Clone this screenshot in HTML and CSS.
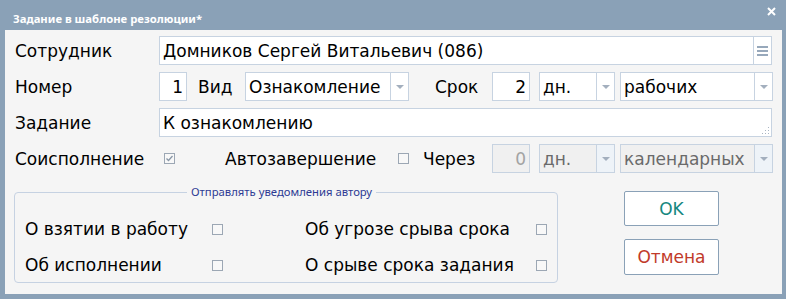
FILE: index.html
```html
<!DOCTYPE html>
<html lang="ru">
<head>
    <meta charset="UTF-8">
    <title>Задание в шаблоне резолюции</title>
    <link rel="stylesheet" href="styles.css">
</head>
<body>

<div class="window">
    <div class="titlebar">
        <span class="title">Задание в шаблоне резолюции*</span>
        <svg class="close" width="9" height="9" viewBox="0 0 9 9">
            <path d="M1 1 L8 8 M8 1 L1 8" stroke="#ffffff" stroke-width="2"/>
        </svg>
    </div>

    <div class="panel">
        <div class="row">
            <label class="lbl">Сотрудник</label>
            <div class="field w-full">
                <span class="value">Домников Сергей Витальевич (086)</span>
                <span class="side">
                    <svg width="11" height="10" viewBox="0 0 11 10">
                        <rect x="0" y="0" width="11" height="2" fill="#97a8bb"/>
                        <rect x="0" y="4" width="11" height="2" fill="#97a8bb"/>
                        <rect x="0" y="8" width="11" height="2" fill="#97a8bb"/>
                    </svg>
                </span>
            </div>
        </div>

        <div class="row">
            <label class="lbl">Номер</label>
            <div class="field num w-num1">1</div>
            <span class="inline vid">Вид</span>
            <div class="field select w-vid"><span class="value">Ознакомление</span><span class="arrow"></span></div>
            <span class="inline srok">Срок</span>
            <div class="field num w-num2">2</div>
            <div class="field select w-days"><span class="value">дн.</span><span class="arrow"></span></div>
            <div class="field select w-kind"><span class="value">рабочих</span><span class="arrow"></span></div>
        </div>

        <div class="row">
            <label class="lbl">Задание</label>
            <div class="field w-full">
                <span class="value">К ознакомлению</span>
                <svg class="grip" width="9" height="9" viewBox="0 0 9 9">
                    <rect x="7" y="1" width="1" height="1" fill="#a9b5c3"/>
                    <rect x="4" y="4" width="1" height="1" fill="#a9b5c3"/>
                    <rect x="7" y="4" width="1" height="1" fill="#a9b5c3"/>
                    <rect x="1" y="7" width="1" height="1" fill="#a9b5c3"/>
                    <rect x="4" y="7" width="1" height="1" fill="#a9b5c3"/>
                    <rect x="7" y="7" width="1" height="1" fill="#a9b5c3"/>
                </svg>
            </div>
        </div>

        <div class="row">
            <label class="lbl">Соисполнение</label>
            <span class="check co-check checked">
                <svg width="9" height="9" viewBox="0 0 9 9">
                    <path d="M1.5 4.5 L3.5 6.5 L7.5 2" stroke="#8896a6" stroke-width="1.3" fill="none"/>
                </svg>
            </span>
            <span class="inline auto">Автозавершение</span>
            <span class="check"></span>
            <span class="inline after">Через</span>
            <div class="field num w-num2 disabled faint">0</div>
            <div class="field select w-days disabled"><span class="value">дн.</span><span class="arrow"></span></div>
            <div class="field select w-kind disabled"><span class="value">календарных</span><span class="arrow"></span></div>
        </div>

        <div class="bottom">
            <fieldset class="notify">
                <legend>Отправлять уведомления автору</legend>
                <div class="notify-grid">
                    <span>О взятии в работу</span>
                    <span class="check"></span>
                    <span class="spacer"></span>
                    <span>Об угрозе срыва срока</span>
                    <span class="check"></span>

                    <span>Об исполнении</span>
                    <span class="check"></span>
                    <span class="spacer"></span>
                    <span>О срыве срока задания</span>
                    <span class="check"></span>
                </div>
            </fieldset>

            <div class="buttons">
                <button class="btn btn-ok">OK</button>
                <button class="btn btn-cancel">Отмена</button>
            </div>
        </div>
    </div>
</div>

</body>
</html>
```

FILE: styles.css
```css
body {
    margin: 0;
    font-family: 'DejaVu Sans', sans-serif;
    font-size: 17px;
    color: #000000;
}

.window {
    width: 786px;
    height: 299px;
    background-color: #8aa1b7;
    display: flex;
    flex-direction: column;
}

.titlebar {
    height: 30px;
    display: flex;
    justify-content: space-between;
    align-items: flex-start;
}

.title {
    font-family: 'Noto Sans', sans-serif;
    font-weight: bold;
    font-size: 11.3px;
    line-height: 16px;
    color: #ffffff;
    padding: 11px 0 0 13px;
}

.close {
    margin: 7px 10px 0 0;
}

.panel {
    flex: 1;
    margin: 0 4px 5px 5px;
    background-color: #f5f5f5;
    padding: 6px 10px 0 10px;
}

.row {
    display: flex;
    align-items: center;
    height: 29px;
    margin-bottom: 7px;
}

.lbl {
    width: 144px;
    flex-shrink: 0;
}

.inline {
    flex-shrink: 0;
}

.field {
    box-sizing: border-box;
    height: 29px;
    border: 1px solid #c7d3e1;
    background-color: #ffffff;
    display: flex;
    align-items: center;
    padding: 0 0 0 3px;
    flex-shrink: 0;
    white-space: nowrap;
    position: relative;
}

.field .value {
    flex: 1;
}

.w-full {
    flex: 1;
}

.num {
    justify-content: flex-end;
    padding: 0 3px 0 0;
}

.w-num1 {
    width: 28px;
}

.w-num2 {
    width: 38px;
}

.vid {
    margin-left: 11px;
    width: 47px;
}

.w-vid {
    width: 164px;
}

.srok {
    margin-left: 26px;
    width: 57px;
}

.w-days {
    width: 76px;
    margin-left: 9px;
}

.w-kind {
    width: 153px;
    margin-left: 5px;
}

.arrow {
    width: 17px;
    align-self: stretch;
    border-left: 1px solid #c7d3e1;
    display: flex;
    align-items: center;
    justify-content: center;
}

.arrow::after {
    content: "";
    border-left: 4px solid transparent;
    border-right: 4px solid transparent;
    border-top: 4px solid #a3afbe;
}

.side {
    width: 17px;
    align-self: stretch;
    border-left: 1px solid #c7d3e1;
    display: flex;
    align-items: center;
    justify-content: center;
}

.grip {
    position: absolute;
    right: 1px;
    bottom: 1px;
}

.disabled {
    background-color: #f0f0f0;
    color: #6a6a6a;
}

.disabled .arrow {
    background-color: #eef3f8;
}

.faint {
    color: #a3a3a3;
}

.check {
    box-sizing: border-box;
    width: 11px;
    height: 11px;
    border: 1px solid #9ca7b4;
    background-color: #f8f8f8;
    flex-shrink: 0;
    display: flex;
    align-items: center;
    justify-content: center;
}

.co-check {
    margin-left: 5px;
}

.auto {
    margin-left: 50px;
    width: 173px;
}

.after {
    margin-left: 14px;
    width: 69px;
}

.bottom {
    display: flex;
    align-items: flex-start;
    margin-top: 11px;
}

.notify {
    width: 544px;
    box-sizing: border-box;
    margin: 0 0 0 -1px;
    padding: 0 0 5px 10px;
    border: 1px solid #c6d2e2;
    border-radius: 4px;
}

.notify legend {
    font-family: 'Noto Sans', sans-serif;
    font-size: 11.3px;
    line-height: 16px;
    color: #2d3b94;
    padding: 0 4px;
    margin-left: 162px;
}

.notify-grid {
    display: grid;
    grid-template-columns: 187px 11px 82px 231px 11px;
    grid-auto-rows: 24px;
    row-gap: 12px;
    align-items: center;
    padding-top: 17px;
}

.buttons {
    margin-left: 66px;
    padding-top: 7px;
    display: flex;
    flex-direction: column;
    gap: 13px;
}

.btn {
    width: 95px;
    height: 35px;
    background-color: #ffffff;
    border: 1px solid #8aa1b7;
    border-radius: 2px;
    font-family: 'DejaVu Sans', sans-serif;
    font-size: 17px;
    padding: 0;
}

.btn-ok {
    color: #17877f;
}

.btn-cancel {
    color: #c13a2a;
    height: 36px;
}
```
